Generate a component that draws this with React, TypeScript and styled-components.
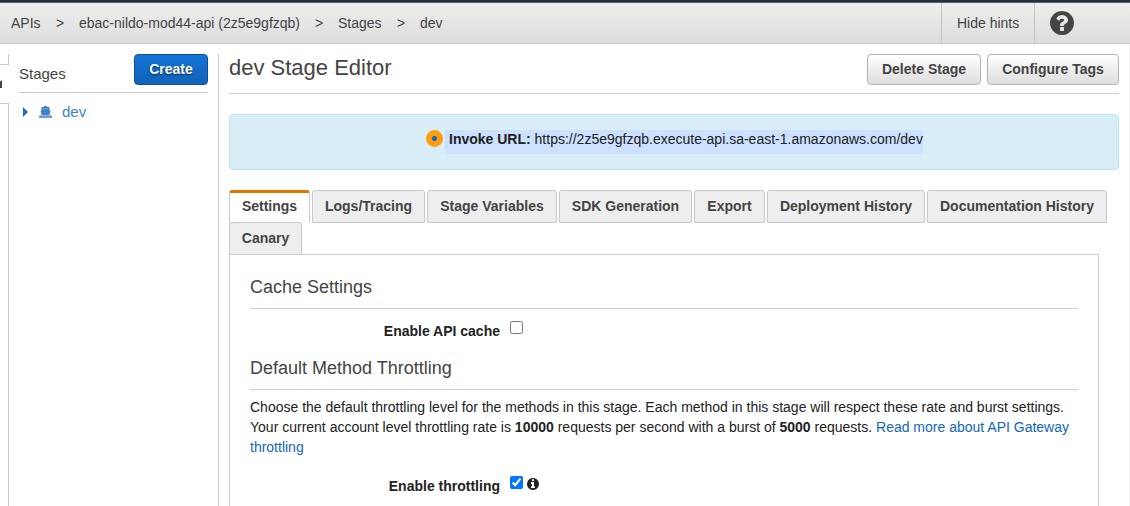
import React from "react";
import styled, { createGlobalStyle, css } from "styled-components";

const GlobalStyle = createGlobalStyle`
  *, *::before, *::after { box-sizing: border-box; }
  html, body { margin: 0; padding: 0; }
  body {
    overflow: hidden;
    background: #fff;
    color: #222;
    font: 14px/20px "Liberation Sans", Arial, Helvetica, sans-serif;
  }
  h1, h2, p { margin: 0; font-weight: 400; }
  button { font-family: inherit; }
`;

const Page = styled.div`
  display: flex;
  flex-direction: column;
  width: 1130px;
  height: 506px;
  overflow: hidden;
`;

const Header = styled.header`
  display: flex;
  flex: none;
  height: 44px;
  padding-top: 1px;
  border-top: 2px solid #232f3e;
  border-bottom: 1px solid #ccc;
  background: linear-gradient(#eee, #ddd);
  box-shadow: inset 0 1px #56606c;
  color: #444;
`;

const Breadcrumbs = styled.nav`
  display: flex;
  flex: 1;
  align-items: center;
  padding-left: 11px;
`;

const Crumb = styled.span<{ $width: number }>`
  flex: none;
  width: ${(p) => p.$width}px;
  white-space: nowrap;
`;

const Separator = styled.span`
  flex: none;
  width: 23px;
  font-size: 14px;
`;

const HeaderCell = styled.div<{ $width: number; $left: number }>`
  display: flex;
  align-items: center;
  width: ${(p) => p.$width}px;
  padding-left: ${(p) => p.$left}px;
  border-left: 1px solid #c4c4c4;
  white-space: nowrap;
`;

const Body = styled.div`
  display: flex;
  flex: 1;
  min-height: 0;
  padding-top: 10px;
  border-right: 1px solid #eee;
`;

const Drawer = styled.div`
  display: flex;
  flex-direction: column;
  flex: none;
  width: 9px;
`;

const DrawerTop = styled.div`
  height: 11px;
  border: solid #ccc;
  border-width: 0 1px 1px 0;
`;

const DrawerHandle = styled.div`
  display: flex;
  align-items: center;
  height: 38px;
`;

const DrawerBottom = styled.div`
  flex: 1;
  border: solid #ccc;
  border-width: 1px 1px 0 0;
`;

const Sidebar = styled.aside`
  flex: none;
  width: 210px;
  padding: 0 10px;
  border-right: 1px solid #ccc;
`;

const SidebarHead = styled.div`
  display: flex;
  justify-content: space-between;
  height: 39px;
  border-bottom: 1px solid #ccc;
  color: #444;
  font-size: 15px;
  line-height: 40px;
`;

const Button = styled.button<{ $primary?: boolean; $width: number }>`
  width: ${(p) => p.$width}px;
  height: 31px;
  padding: 0;
  border: 1px solid #b5b5b5;
  border-radius: 4px;
  background: linear-gradient(#fff, #ddd);
  color: #444;
  font-size: 14px;
  font-weight: 700;
  line-height: 29px;
  white-space: nowrap;
  ${(p) =>
    p.$primary &&
    css`
      border-color: #0f4e91;
      background: linear-gradient(#1474d8, #1163b8);
      color: #fff;
      text-shadow: 0 1px 2px rgba(0, 0, 0, 0.7);
    `}
`;

const TreeItem = styled.div`
  display: flex;
  align-items: center;
  height: 38px;
  padding-left: 4px;
  color: #4183c9;
  font-size: 15px;
`;

const Caret = styled.span`
  width: 0;
  height: 0;
  margin-right: 11px;
  border: solid transparent;
  border-width: 5px 0 5px 5px;
  border-left-color: #146ec8;
`;

const ShipSvg = styled.svg`
  width: 13px;
  height: 12px;
  margin-right: 10px;
`;

const Main = styled.main`
  display: flex;
  flex-direction: column;
  width: 900px;
  padding-left: 10px;
`;

const TitleRow = styled.div`
  display: flex;
  gap: 6px;
  height: 40px;
  border-bottom: 1px solid #ccc;
`;

const Title = styled.h1`
  flex: 1;
  color: #444;
  font-size: 22px;
  line-height: 27px;
`;

const Banner = styled.div`
  display: flex;
  flex: none;
  height: 56px;
  margin-top: 20px;
  padding: 15px 0 0 196px;
  border: 1px solid #b9e8ef;
  border-radius: 4px;
  background: #d9edf7;
`;

const Marker = styled.span`
  flex: none;
  width: 17px;
  height: 17px;
  margin-right: 2px;
  border: 6px solid #ff9c12;
  border-radius: 50%;
  background: #1166bb;
`;

const InvokeUrl = styled.span`
  height: 24px;
  padding-left: 4px;
  background: #cce0ff;
  line-height: 18px;
  white-space: nowrap;
`;

const Tabs = styled.div`
  display: flex;
  flex: none;
  flex-wrap: wrap;
  align-content: flex-start;
  column-gap: 2px;
  height: 64px;
  margin-top: 20px;
`;

const Tab = styled.div<{ $active?: boolean; $last?: boolean; $width: number }>`
  width: ${(p) => p.$width}px;
  height: 33px;
  margin-bottom: -1px;
  border: 1px solid #c8c8c8;
  border-radius: 3px 3px 0 0;
  background: #eee;
  color: #444;
  font-weight: 700;
  line-height: 31px;
  text-align: center;
  white-space: nowrap;
  ${(p) =>
    p.$active &&
    css`
      border-top: 3px solid #e07700;
      border-bottom-color: transparent;
      background: #fff;
      line-height: 27px;
    `}
  ${(p) => p.$last && css`border-bottom: 0;`}
`;

const Panel = styled.section`
  flex: 1;
  width: 870px;
  padding: 19px 20px 0;
  border: 1px solid #ccc;
  border-bottom: 0;
`;

const SectionTitle = styled.h2`
  height: 35px;
  border-bottom: 1px solid #ccc;
  color: #444;
  font-size: 18px;
  line-height: 26px;
`;

const Field = styled.div<{ $height: number; $top: number }>`
  display: flex;
  height: ${(p) => p.$height}px;
  padding-top: ${(p) => p.$top}px;
`;

const Label = styled.label`
  width: 250px;
  margin-right: 10px;
  font-weight: 700;
  line-height: 21px;
  text-align: right;
`;

const Checkbox = styled.input`
  width: 13px;
  height: 13px;
  margin: 0 4px 0 0;
  accent-color: #0075ff;
`;

const InfoMark = styled.span`
  display: flex;
  padding-top: 2px;
`;

const Description = styled.p`
  padding-top: 7px;
  white-space: nowrap;
`;

const Link = styled.a`
  color: #1166bb;
`;

const HELP =
  "M1024 1376v-192q0-14-9-23t-23-9h-192q-14 0-23 9t-9 23v192q0 14 9 23t23 9h192q14 0 23-9t9-23zm256-672q0-88-55.5-163t-138.500-116-170-41q-243 0-371 213-15 24 8 42l132 100q7 6 19 6 16 0 25-12 53-68 86-92 34-24 86-24 48 0 85.500 26t37.500 59q0 38-20 61t-68 45q-63 28-115.500 86.500t-52.500 125.500v36q0 14 9 23t23 9h192q14 0 23-9t9-23q0-19 21.500-49.500t54.500-49.500q32-18 49-28.500t46-35 44.500-48 28-60.500 12.500-81zm384 192q0 209-103 385.500t-279.500 279.500-385.500 103-385.500-103-279.500-279.500-103-385.500 103-385.500 279.500-279.500 385.500-103 385.500 103 279.500 279.500 103 385.500z";
const INFO =
  "M1152 1376v-160q0-14-9-23t-23-9h-96v-512q0-14-9-23t-23-9h-320q-14 0-23 9t-9 23v160q0 14 9 23t23 9h96v320h-96q-14 0-23 9t-9 23v160q0 14 9 23t23 9h448q14 0 23-9t9-23zm-128-896v-160q0-14-9-23t-23-9h-192q-14 0-23 9t-9 23v160q0 14 9 23t23 9h192q14 0 23-9t9-23zm640 416q0 209-103 385.500t-279.500 279.500-385.500 103-385.500-103-279.500-279.500-103-385.500 103-385.500 279.500-279.500 385.500-103 385.500 103 279.500 279.500 103 385.500z";

const Icon = ({ d, size, color }: { d: string; size: number; color: string }) => (
  <svg width={size} height={size} viewBox="128 128 1536 1536" fill={color}>
    <path d={d} />
  </svg>
);

const Ship = () => (
  <ShipSvg viewBox="0 0 13 12" fill="#4183c9">
    <path d="M5 0h3v1h2.500v3.300L11.500 5 10.300 9.300H2.700L1.500 5 2.500 4.300V1H5z" />
    <path d="M3.800 2h5.400v1.600L6.500 2.800 3.800 3.600z" fill="#6a9cd4" />
    <path d="M0 9.700l1.500-.8 1.700.8 1.600-.8 1.700.8 1.700-.8 1.600.8 1.700-.8 1.500.8V12H0z" fill="#6f9bd0" />
  </ShipSvg>
);

const tabs = [
  { name: "Settings", width: 81, active: true },
  { name: "Logs/Tracing", width: 113 },
  { name: "Stage Variables", width: 130 },
  { name: "SDK Generation", width: 133 },
  { name: "Export", width: 71 },
  { name: "Deployment History", width: 158 },
  { name: "Documentation History", width: 180 },
  { name: "Canary", width: 73, last: true },
];

export default function App() {
  return (
    <>
      <GlobalStyle />
      <Page>
        <Header>
          <Breadcrumbs>
            <Crumb $width={45}>APIs</Crumb>
            <Separator>&gt;</Separator>
            <Crumb $width={236}>ebac-nildo-mod44-api (2z5e9gfzqb)</Crumb>
            <Separator>&gt;</Separator>
            <Crumb $width={59}>Stages</Crumb>
            <Separator>&gt;</Separator>
            <Crumb $width={40}>dev</Crumb>
          </Breadcrumbs>
          <HeaderCell $width={93} $left={15}>Hide hints</HeaderCell>
          <HeaderCell $width={96} $left={15}>
            <Icon d={HELP} size={24} color="#444" />
          </HeaderCell>
        </Header>
        <Body>
          <Drawer>
            <DrawerTop />
            <DrawerHandle>
              <svg width="2" height="8" fill="#444">
                <path d="M0 1.500L2 0v8H0z" />
              </svg>
            </DrawerHandle>
            <DrawerBottom />
          </Drawer>
          <Sidebar>
            <SidebarHead>
              <span>Stages</span>
              <Button $primary $width={74}>Create</Button>
            </SidebarHead>
            <TreeItem>
              <Caret />
              <Ship />
              dev
            </TreeItem>
          </Sidebar>
          <Main>
            <TitleRow>
              <Title>dev Stage Editor</Title>
              <Button $width={114}>Delete Stage</Button>
              <Button $width={132}>Configure Tags</Button>
            </TitleRow>
            <Banner>
              <Marker />
              <InvokeUrl>
                <b>Invoke URL:</b> https://2z5e9gfzqb.execute-api.sa-east-1.amazonaws.com/dev
              </InvokeUrl>
            </Banner>
            <Tabs>
              {tabs.map((t) => (
                <Tab key={t.name} $width={t.width} $active={t.active} $last={t.last}>
                  {t.name}
                </Tab>
              ))}
            </Tabs>
            <Panel>
              <SectionTitle>Cache Settings</SectionTitle>
              <Field $height={46} $top={12}>
                <Label>Enable API cache</Label>
                <Checkbox type="checkbox" />
              </Field>
              <SectionTitle>Default Method Throttling</SectionTitle>
              <Description>
                Choose the default throttling level for the methods in this stage. Each method in this stage will respect these rate and burst settings.
                <br />
                Your current account level throttling rate is <b>10000</b> requests per second with a burst of <b>5000</b> requests.{" "}
                <Link>Read more about API Gateway</Link>
                <br />
                <Link>throttling</Link>
              </Description>
              <Field $height={46} $top={19}>
                <Label>Enable throttling</Label>
                <Checkbox type="checkbox" defaultChecked />
                <InfoMark>
                  <Icon d={INFO} size={12} color="#222" />
                </InfoMark>
              </Field>
            </Panel>
          </Main>
        </Body>
      </Page>
    </>
  );
}
